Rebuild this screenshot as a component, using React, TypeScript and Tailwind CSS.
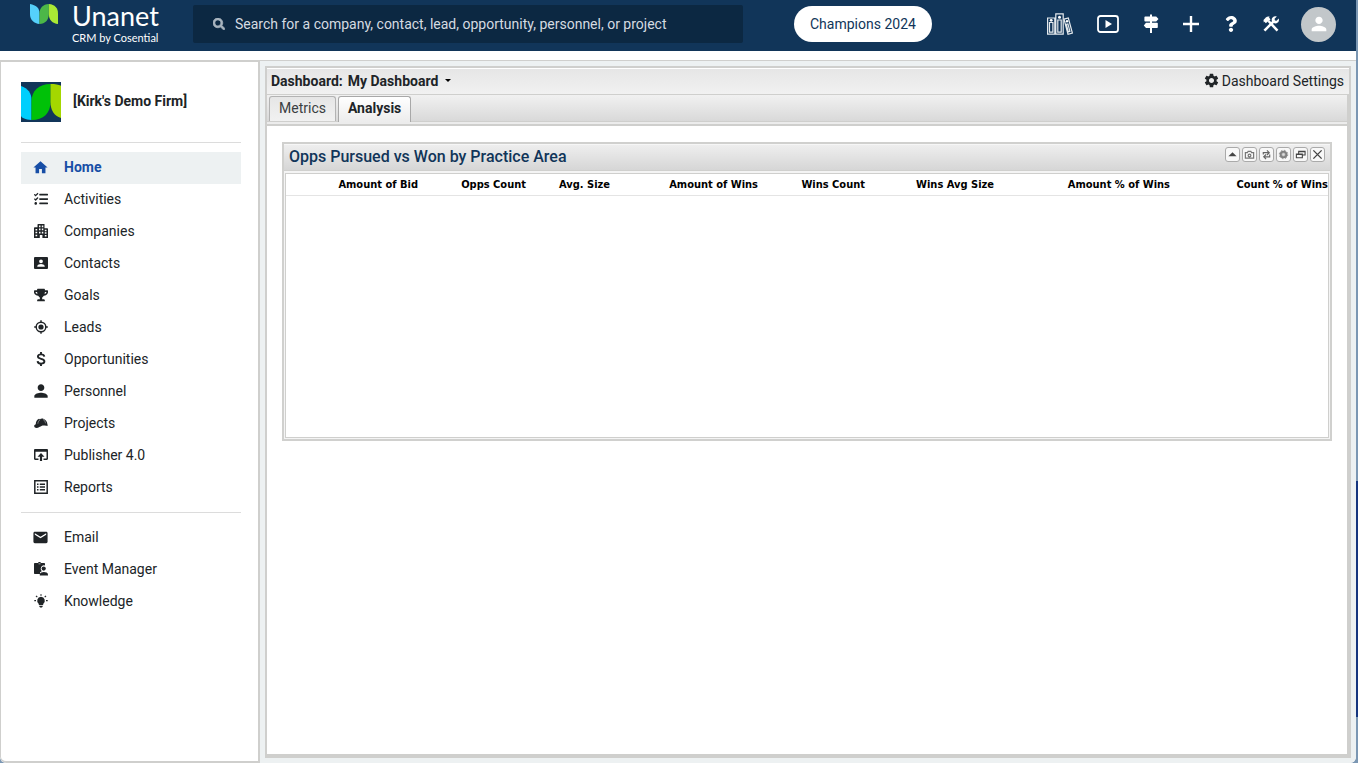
import type { ReactNode } from "react";
import { MdEmail, MdHome, MdPerson, MdSettings } from "react-icons/md";
import { FaQuestion, FaSearch, FaTasks, FaTrophy } from "react-icons/fa";

interface NavItem {
  label: string;
  icon: ReactNode;
  active?: boolean;
}

function CompaniesIcon() {
  return (
    <svg viewBox="0 0 14 14" width="14" height="14" fill="currentColor">
      <path
        fillRule="evenodd"
        d="M4 0h6.500v4.200H13c.6 0 1 .4 1 1V14H8.400v-3H5.800v3H0V4.200c0-.6.4-1 1-1h2.500V.5zM5 1.500v1.700h1.500V1.500zM7.800 1.500v1.700h1.500V1.500zM5 4.600v1.700h1.500V4.600zM7.800 4.600v1.700h1.500V4.600zM5 7.700v1.700h1.500V7.700zM7.800 7.700v1.700h1.500V7.700zM1.500 4.900v1.500h1.700V4.900zM1.500 7.800v1.500h1.700V7.800zM1.500 10.800v1.500h1.700v-1.500zM10.800 5.700v1.500h1.700V5.700zM10.800 8.300v1.500h1.700V8.300zM10.800 11v1.500h1.700V11z"
      />
    </svg>
  );
}

function ContactCardIcon() {
  return (
    <svg viewBox="0 0 14 14" width="14" height="14" fill="currentColor">
      <path
        fillRule="evenodd"
        d="M1 1h12a1 1 0 0 1 1 1v10a1 1 0 0 1-1 1H1a1 1 0 0 1-1-1V2a1 1 0 0 1 1-1zm6 2.400a1.900 1.900 0 1 0 0 3.800 1.900 1.900 0 0 0 0-3.800zM3.300 10.800h7.400v-.7c0-1.300-2.300-2-3.700-2s-3.700.7-3.700 2z"
      />
    </svg>
  );
}

function LeadsIcon() {
  return (
    <svg viewBox="0 0 14 14" width="14" height="14" fill="none" stroke="currentColor" strokeWidth="1.400">
      <circle cx="7" cy="7" r="4.800" />
      <circle cx="7" cy="7" r="2.600" fill="currentColor" stroke="none" />
      <path d="M7 .2v2M7 11.800v2M.2 7h2M11.800 7h2" />
    </svg>
  );
}

function DollarIcon() {
  return (
    <svg viewBox="0 0 14 14" width="14" height="14" fill="none" stroke="currentColor" strokeWidth="1.900">
      <path d="M10.300 4.700C10.100 3.200 9 2.400 7 2.400c-1.900 0-3.100.9-3.100 2.200C3.900 7.600 10.400 6 10.400 9.300c0 1.500-1.400 2.300-3.300 2.300-2.100 0-3.400-.9-3.500-2.500M7 0v2.400M7 11.600V14" />
    </svg>
  );
}

function HardHatIcon() {
  return (
    <svg viewBox="0 0 14 14" width="14" height="14" fill="currentColor">
      <path d="M.2 9.600C.5 9 1.300 8.700 1.800 8.300 1.700 5.700 3 3.700 5 2.800l.9.400c.7-.7 2.400-.9 3.400-.5 2.600.9 4 3.200 4.100 5.600l.5 1.200c-1.700.9-3.900-.3-5.900.3-2.100.7-3.300 2.200-5.400 2.200C1.100 12-.1 11 .2 9.600z" />
      <path d="M6.200 3.500C4.800 4.600 4 6 3.900 7.700M9 3.300c1.500 1 2.300 2.300 2.500 4" stroke="#fff" strokeWidth=".4" fill="none" />
    </svg>
  );
}

function PublisherIcon() {
  return (
    <svg viewBox="0 0 14 14" width="14" height="14" fill="currentColor">
      <path d="M1.200 1h11.600c.7 0 1.200.5 1.200 1.200v8.600c0 .7-.5 1.200-1.200 1.200H9.500v-1.500h3V3.700h-11v6.800h3V12H1.200C.5 12 0 11.500 0 10.800V2.200C0 1.500.5 1 1.200 1z" />
      <path d="M7 5l3.500 3.700H8.100V13H5.900V8.700H3.500z" />
    </svg>
  );
}

function ReportsIcon() {
  return (
    <svg viewBox="0 0 14 14" width="14" height="14" fill="none" stroke="currentColor" strokeWidth="1.500">
      <path d="M.8.8h12.400v12.400H.8z" />
      <path d="M3 4.200h1.500M3 7h1.500M3 9.800h1.500M5.800 4.200H11M5.800 7H11M5.800 9.800H11" strokeWidth="1.400" />
    </svg>
  );
}

function EventManagerIcon() {
  return (
    <svg viewBox="0 0 14 14" width="14" height="14" fill="currentColor">
      <path d="M1 1h3c.2-.7.800-1 1.500-1S6.800.3 7 1h3c.6 0 1 .4 1 1v1.500a3.400 3.400 0 0 0-3.300 5.700L6 10.300V12H1c-.6 0-1-.4-1-1V2c0-.6.4-1 1-1z" />
      <circle cx="9.700" cy="6.600" r="2.100" />
      <path d="M5.800 13.500v-1.100c0-1.500 2.500-2.300 4.100-2.300s4.100.8 4.100 2.300v1.100z" />
      <path d="M4.500 1.800h2" stroke="#fff" strokeWidth=".6" />
    </svg>
  );
}

function BulbIcon() {
  return (
    <svg viewBox="0 0 14 14" width="14" height="14" fill="currentColor">
      <path d="M7 2.700a4 4 0 0 0-2.200 7.200V11h4.400V9.900A4 4 0 0 0 7 2.700zM5.300 11.700h3.400v.8l-.8 1.100H6.100l-.8-1.100z" />
      <path d="M7 .2v1.600M.3 6.700h1.700M12 6.700h1.700M2 1.800l1.300 1.300M12 1.800l-1.300 1.300" stroke="currentColor" strokeWidth="1.200" />
    </svg>
  );
}

function BindersIcon() {
  return (
    <svg viewBox="0 0 26 22" width="26" height="22" fill="none" stroke="#e4e9ed" strokeWidth="1.200">
      <path d="M.6 5h7.200v16.200H.6zM8.800.8h7.400v20.400H8.800zM2.500 9.500v9.700h3.400V9.500zM10.800 7v12.200h3.400V7z" />
      <path d="M17 6.200l4.300-1.200 4.100 15-4.400 1.300zM19.300 11.300l1.600-.4 2 7.500-1.600.5z" />
      <g fill="#fff" stroke="none">
        <circle cx="4.200" cy="7.300" r="1.400" />
        <circle cx="12.500" cy="4.200" r="1.500" />
        <circle cx="20" cy="8.200" r="1.200" />
      </g>
    </svg>
  );
}

function PlayBoxIcon() {
  return (
    <svg viewBox="0 0 22 18" width="22" height="18" fill="none">
      <rect x="1" y="1" width="20" height="16" rx="2.500" stroke="#fff" strokeWidth="1.800" />
      <path d="M8.500 5l6.500 4-6.500 4z" fill="#fff" />
    </svg>
  );
}

function SignpostIcon() {
  return (
    <svg viewBox="0 0 16 20" width="16" height="20" fill="currentColor">
      <path d="M7 .5h2v2h4.200L15.500 5l-2.300 2.600H9v1.100h5c.5 0 .8.300.8.800v3.700c0 .5-.3.800-.8.800H9v5H7v-5H3L.8 11.400 3 8.700h4V7.600H2.200c-.5 0-.8-.3-.8-.8V3.300c0-.5.3-.8.8-.8H7z" />
    </svg>
  );
}

function PlusIcon() {
  return (
    <svg viewBox="0 0 16 16" width="16" height="16" stroke="currentColor" strokeWidth="2.400">
      <path d="M8 0v16M0 8h16" />
    </svg>
  );
}

function ToolsIcon() {
  return (
    <svg viewBox="0 0 16 16" width="16" height="16" fill="none" stroke="currentColor">
      {/* hammer */}
      <path d="M5.500 5l9 9.700" strokeWidth="2.500" />
      <path d="M.8 6.600L6.700.8C5.300.2 3.900.6 2.900 1.600L.5 4z" fill="currentColor" stroke="none" />
      <path d="M1.800 6L6.600 2.200" strokeWidth="3" />
      {/* wrench */}
      <path d="M1.400 14.600L11 5" strokeWidth="2.600" />
      <path
        d="M13.800.5L11.600 2.700l.3 1.700 1.700.3 2.100-2.200c.6 1.700.1 3.200-1 4.100-1.100 1-2.700 1.100-3.900.5L9 5.200c-.6-1.300-.4-2.600.6-3.700C10.700.3 12.300-.1 13.800.5z"
        fill="currentColor"
        stroke="none"
      />
    </svg>
  );
}

function UnanetMark() {
  return (
    <svg viewBox="0 0 28 20" width="28" height="20">
      <path d="M0 0c6 1 9.500 4 9.500 9.500V20C4 19.500 0 16 0 10z" fill="#55d0fb" />
      <path d="M9.500 20V9.500C9.500 4 13 .3 18.800 0v10c0 6-3.500 9.800-9.300 10z" fill="#4cb748" />
      <path d="M18.800 0C25 .5 28 4 28 9.500V20c-5.500-.5-9.200-4-9.200-10z" fill="#a9e935" />
    </svg>
  );
}

function FirmLogo() {
  return (
    <svg viewBox="0 0 40 40" width="40" height="40" aria-label="Firm logo">
      <path d="M0 0h40v40H0z" fill="#113559" />
      <path d="M0 4c7 2.500 10.500 7 10.500 14v20C4 37.500 1 36 0 34z" fill="#00cffd" />
      <path d="M10.500 38V19C10.500 9 18 2 29.500 2v18c0 11-7 18-19 18z" fill="#00c108" />
      <path d="M29.500 2c5 0 8 .5 10.500 1.800V36c-7-2-10.500-8-10.500-16z" fill="#a4d700" />
    </svg>
  );
}

const mainNav: NavItem[] = [
  { label: "Home", icon: <MdHome size={17} />, active: true },
  { label: "Activities", icon: <FaTasks size={14} /> },
  { label: "Companies", icon: <CompaniesIcon /> },
  { label: "Contacts", icon: <ContactCardIcon /> },
  { label: "Goals", icon: <FaTrophy size={14} /> },
  { label: "Leads", icon: <LeadsIcon /> },
  { label: "Opportunities", icon: <DollarIcon /> },
  { label: "Personnel", icon: <MdPerson size={20} /> },
  { label: "Projects", icon: <HardHatIcon /> },
  { label: "Publisher 4.0", icon: <PublisherIcon /> },
  { label: "Reports", icon: <ReportsIcon /> },
];

const toolsNav: NavItem[] = [
  { label: "Email", icon: <MdEmail size={17} /> },
  { label: "Event Manager", icon: <EventManagerIcon /> },
  { label: "Knowledge", icon: <BulbIcon /> },
];

const columns = [
  { label: "Amount of Bid", width: "w-[132px]" },
  { label: "Opps Count", width: "w-[108px]" },
  { label: "Avg. Size", width: "w-[84px]" },
  { label: "Amount of Wins", width: "w-[148px]" },
  { label: "Wins Count", width: "w-[107px]" },
  { label: "Wins Avg Size", width: "w-[129px]" },
  { label: "Amount % of Wins", width: "w-[176px]" },
  { label: "Count % of Wins", width: "w-[158px]" },
];

const widgetTools: { label: string; icon: ReactNode }[] = [
  { label: "Collapse", icon: <path d="M1.500 8h9L6 3.500z" fill="#444" stroke="none" /> },
  {
    label: "Snapshot",
    icon: (
      <path
        d="M1.500 4h2.200l.8-1.500h3L8.300 4h2.200v6h-9zM6 5.500a1.500 1.500 0 1 0 0 3 1.500 1.500 0 0 0 0-3z"
        stroke="#777"
        strokeWidth="1.300"
      />
    ),
  },
  {
    label: "Refresh",
    icon: <path d="M2.500 6V4h6M6.500 1.500L9 4 6.500 6.500M9.500 6v2.500h-6M5.500 6L3 8.500 5.500 11" stroke="#666" strokeWidth="1.300" />,
  },
  {
    label: "Widget settings",
    icon: (
      <>
        <circle cx="6" cy="6" r="3.200" fill="#aaa" stroke="#808080" strokeWidth="2" />
        <circle cx="6" cy="6" r="4.600" stroke="#808080" strokeDasharray="1.800 1.800" />
        <circle cx="6" cy="6" r="1.300" fill="#ddd" stroke="none" />
      </>
    ),
  },
  {
    label: "Restore",
    icon: <path d="M4 5.500V2.500h7v4H8M1.500 5.500h6.500v4H1.500zM4 3h7M1.500 6H8" stroke="#444" strokeWidth="1.200" />,
  },
  { label: "Close", icon: <path d="M1.500 1.500l9 9M10.500 1.500l-9 9" stroke="#444" strokeWidth="1.500" /> },
];

function NavList({ items }: { items: NavItem[] }) {
  return (
    <ul>
      {items.map((item) => (
        <li key={item.label}>
          <a
            href="#"
            className={
              item.active
                ? "flex h-8 items-center bg-[#edf1f2] pb-0.5 font-bold text-[#174ea6]"
                : "flex h-8 items-center pb-0.5 text-[#202427]"
            }
          >
            <span className="ml-2 mr-3 flex w-[23px] justify-center">{item.icon}</span>
            {item.label}
          </a>
        </li>
      ))}
    </ul>
  );
}

function TopBar() {
  return (
    <header className="flex h-[51px] shrink-0 items-center bg-[#113559] pb-[3px] pr-5 text-white">
      <a href="#" className="flex h-full w-[193px] shrink-0 items-start pl-[30px]">
        <span className="mt-1">
          <UnanetMark />
        </span>
        <span className="ml-3.5 flex flex-col whitespace-nowrap font-['Lato']">
          <span className="text-[27px] leading-[32px]">Unanet</span>
          <span className="text-[11px] leading-[12px]">CRM by Cosential</span>
        </span>
      </a>
      <label className="flex h-[38px] w-[550px] items-center rounded-xs bg-[#0c2842] pl-5">
        <FaSearch size={12} stroke="currentColor" strokeWidth={30} className="text-[#a9b5bf]" />
        <input
          type="search"
          aria-label="Search"
          placeholder="Search for a company, contact, lead, opportunity, personnel, or project"
          className="ml-2.5 flex-1 bg-transparent outline-none placeholder:text-[#d5dbe1]"
        />
      </label>
      <button className="ml-[51px] h-9 rounded-full bg-white px-4 text-[#113559]">Champions 2024</button>
      <div className="ml-auto mr-[22px] flex items-center gap-6">
        <button aria-label="Library">
          <BindersIcon />
        </button>
        <button aria-label="Videos">
          <PlayBoxIcon />
        </button>
        <button aria-label="Guides">
          <SignpostIcon />
        </button>
        <button aria-label="Add">
          <PlusIcon />
        </button>
        <button aria-label="Help">
          <FaQuestion size={16} />
        </button>
        <button aria-label="Tools">
          <ToolsIcon />
        </button>
      </div>
      <button aria-label="Account" className="flex size-[35px] items-center justify-center rounded-full bg-[#c2c7ca]">
        <MdPerson size={22} />
      </button>
    </header>
  );
}

function Sidebar() {
  return (
    <aside className="w-[260px] shrink-0 rounded-bl-md border-2 border-l border-[#cfcfcd] bg-white pl-5 pr-[17px] pt-5">
      <div className="flex items-center gap-3 border-b border-[#dcdcdc] pb-5 font-bold text-[#202427]">
        <FirmLogo />
        <span className="pb-0.5">[Kirk's Demo Firm]</span>
      </div>
      <nav className="mt-[9px]">
        <NavList items={mainNav} />
        <hr className="mb-[9px] mt-2 border-[#dcdcdc]" />
        <NavList items={toolsNav} />
      </nav>
    </aside>
  );
}

function Widget() {
  return (
    <section className="border-2 border-[#d0d0ce] bg-[#f4f4f4]">
      <div className="flex h-[27px] items-center justify-between border-y border-b-[#d0d0ce] border-t-[#f6f6f6] bg-linear-to-b from-[#eeeeee] to-[#d6d6d6] px-[5px] pb-0.5">
        <h2 className="text-base font-medium text-[#113559]">Opps Pursued vs Won by Practice Area</h2>
        <div className="flex gap-0.5 pb-1">
          {widgetTools.map((tool) => (
            <button
              key={tool.label}
              aria-label={tool.label}
              className="flex size-[15px] items-center justify-center rounded-[3px] border border-[#aaa] bg-[#f8f8f8]"
            >
              <svg viewBox="0 0 12 12" width="11" height="11" fill="none">
                {tool.icon}
              </svg>
            </button>
          ))}
        </div>
      </div>
      <div className="m-px mt-0.5 h-[265px] border border-[#cfcfcd] bg-white">
        <table className="w-full table-fixed border-b border-[#e4e4e4] font-['DejaVu_Sans_Condensed','Noto_Sans',sans-serif] text-[11px] leading-[21px] text-black">
          <thead>
            <tr>
              {columns.map((col) => (
                <th key={col.label} className={`${col.width} whitespace-nowrap p-0 text-right font-bold`}>
                  {col.label}
                </th>
              ))}
            </tr>
          </thead>
        </table>
      </div>
    </section>
  );
}

function Dashboard() {
  return (
    <main className="flex min-w-0 flex-1 flex-col border-t border-[#cfcfcd] bg-[#edf1f2] p-[5px]">
      <div className="flex flex-1 flex-col border-2 border-b-4 border-[#cfcfcd] bg-white">
        <div className="mt-px flex h-[26px] items-center justify-between border-b border-[#cfcfcd] bg-linear-to-b from-[#e6e6e6] to-[#f1f1f1] pb-0.5 pl-1 pr-[5px] text-[#202427]">
          <div className="flex items-center font-bold">
            <label htmlFor="dashboard">Dashboard:</label>
            <select id="dashboard" className="ml-[5px] appearance-none bg-transparent font-bold">
              <option>My Dashboard</option>
            </select>
            <svg viewBox="0 0 6 3" width="6" height="3" className="ml-1.5">
              <path d="M0 0h6L3 3z" />
            </svg>
          </div>
          <button className="flex items-center gap-0.5">
            <MdSettings size={17} />
            Dashboard Settings
          </button>
        </div>
        <div className="flex flex-1 flex-col border-r-2 border-[#cfcfcd]">
          <div
            role="tablist"
            className="flex h-[27px] items-end gap-0.5 border-b border-[#cfcfcd] bg-linear-to-b from-[#f1f1f1] to-[#d9d9d9] pl-0.5"
          >
            <button
              role="tab"
              aria-selected="false"
              className="h-[25px] rounded-t-[3px] border border-b-0 border-[#b3b3b3] bg-linear-to-b from-[#e6e6e6] to-[#f1f1f1] px-[9px] pb-0.5 text-[#3a3e41]"
            >
              Metrics
            </button>
            <button
              role="tab"
              aria-selected="true"
              className="-mb-px h-[26px] rounded-t-[3px] border border-b-0 border-[#a8a8a8] bg-linear-to-b from-white to-[#ececec] px-[9px] pb-[3px] font-bold text-[#202427]"
            >
              Analysis
            </button>
          </div>
          <div className="h-1 border-b-2 border-[#cfcfcd] bg-[#ececec]" />
          <div className="px-[15px] pt-4">
            <Widget />
          </div>
        </div>
      </div>
    </main>
  );
}

export default function App() {
  return (
    <div className="flex h-screen bg-[#7b97b3] font-['Roboto',sans-serif] text-[14px] leading-5">
      <div className="flex min-w-0 flex-1 flex-col overflow-hidden rounded-b-md bg-white">
        <TopBar />
        <div className="mt-[9px] flex flex-1">
          <Sidebar />
          <Dashboard />
        </div>
      </div>
      {/* sliver of desktop beside the window */}
      <div className="flex w-0.5 flex-col">
        <div className="basis-[63%]" />
        <div className="basis-[31%] bg-[#15357f]" />
      </div>
    </div>
  );
}
